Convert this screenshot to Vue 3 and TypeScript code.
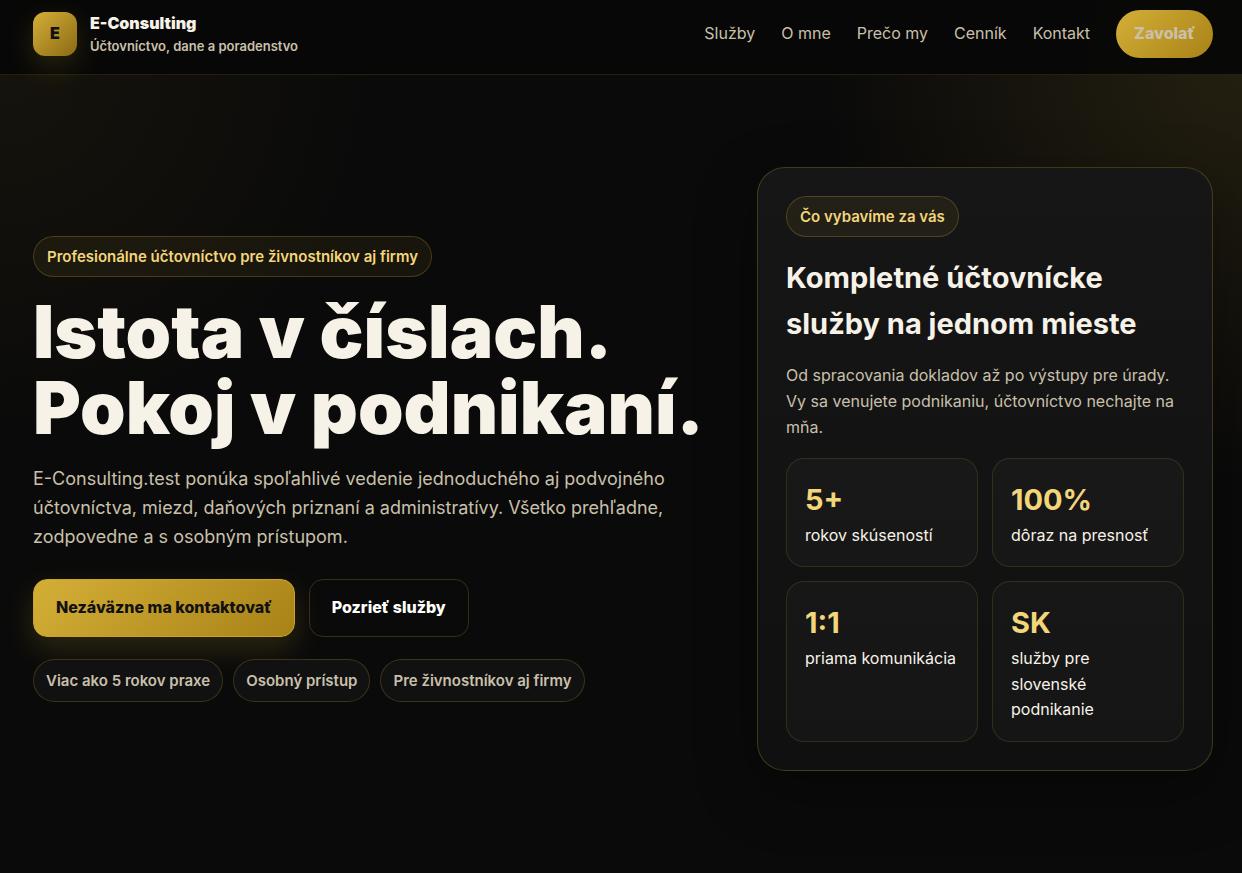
<script setup lang="ts">
interface NavLink {
  label: string
  href: string
}

interface Stat {
  value: string
  label: string
}

const links: NavLink[] = [
  { label: 'Služby', href: '#sluzby' },
  { label: 'O mne', href: '#o-mne' },
  { label: 'Prečo my', href: '#preco-my' },
  { label: 'Cenník', href: '#cennik' },
  { label: 'Kontakt', href: '#kontakt' },
]

const chips: string[] = ['Viac ako 5 rokov praxe', 'Osobný prístup', 'Pre živnostníkov aj firmy']

const stats: Stat[] = [
  { value: '5+', label: 'rokov skúseností' },
  { value: '100%', label: 'dôraz na presnosť' },
  { value: '1:1', label: 'priama komunikácia' },
  { value: 'SK', label: 'služby pre slovenské podnikanie' },
]
</script>

<template>
  <div class="page">
    <header class="topbar">
      <a class="brand" href="#domov">
        <span class="logo">E</span>
        <span class="brand-text">
          <strong>E-Consulting</strong>
          <small>Účtovníctvo, dane a poradenstvo</small>
        </span>
      </a>
      <nav class="nav">
        <a v-for="link in links" :key="link.href" :href="link.href">{{ link.label }}</a>
        <a class="call" href="#zavolat">Zavolať</a>
      </nav>
    </header>

    <main class="hero">
      <section class="intro">
        <span class="badge">Profesionálne účtovníctvo pre živnostníkov aj firmy</span>
        <h1>Istota v číslach.<br />Pokoj v podnikaní.</h1>
        <p class="lead">
          E-Consulting.test ponúka spoľahlivé vedenie jednoduchého aj podvojného účtovníctva, miezd,
          daňových priznaní a administratívy. Všetko prehľadne, zodpovedne a s osobným prístupom.
        </p>
        <div class="actions">
          <a class="btn btn-primary" href="#kontakt">Nezáväzne ma kontaktovať</a>
          <a class="btn" href="#sluzby">Pozrieť služby</a>
        </div>
        <ul class="chips">
          <li v-for="chip in chips" :key="chip">{{ chip }}</li>
        </ul>
      </section>

      <aside class="card">
        <span class="badge">Čo vybavíme za vás</span>
        <h2>Kompletné účtovnícke služby na jednom mieste</h2>
        <p>
          Od spracovania dokladov až po výstupy pre úrady. Vy sa venujete podnikaniu, účtovníctvo
          nechajte na mňa.
        </p>
        <div class="stats">
          <div v-for="stat in stats" :key="stat.value" class="stat">
            <strong>{{ stat.value }}</strong>
            <span>{{ stat.label }}</span>
          </div>
        </div>
      </aside>
    </main>
  </div>
</template>

<style>
body {
  margin: 0;
  background: #0a0a0a;
}
</style>

<style scoped>
.page {
  min-height: 100vh;
  box-sizing: border-box;
  color: #f7f2e8;
  font-family: Inter, 'Liberation Sans', sans-serif;
  font-size: 16px;
  line-height: 1.6;
  background:
    radial-gradient(circle at 100% 60px, rgba(212, 175, 55, 0.13), transparent 420px),
    radial-gradient(circle at 0 60px, rgba(212, 175, 55, 0.06), transparent 380px),
    #0a0a0a;
}

a {
  color: inherit;
  text-decoration: none;
}

.topbar {
  display: flex;
  align-items: center;
  justify-content: space-between;
  padding: 10px 29px 16px 33px;
  background: rgba(7, 7, 7, 0.96);
  border-bottom: 1px solid rgba(212, 175, 55, 0.15);
}

.brand {
  display: flex;
  align-items: center;
  gap: 13px;
}

.logo {
  display: grid;
  place-items: center;
  width: 44px;
  height: 44px;
  border-radius: 12px;
  background: linear-gradient(135deg, #d4af37, #8b6914);
  box-shadow: 0 10px 30px rgba(212, 175, 55, 0.18);
  color: #111;
  font-weight: 900;
}

.brand-text {
  display: flex;
  flex-direction: column;
}

.brand-text strong {
  line-height: 24px;
  font-weight: 900;
}

.brand-text small {
  font-size: 13px;
  line-height: 22px;
  font-weight: 600;
  color: #c9c0ab;
}

.nav {
  display: flex;
  align-items: center;
  gap: 26px;
  color: #c9c0ab;
}

.call {
  padding: 11px 18px;
  border-radius: 24px;
  background: linear-gradient(135deg, #d4af37, #a88217);
  font-weight: 800;
}

.hero {
  display: grid;
  grid-template-columns: minmax(0, 680fr) minmax(0, 456fr);
  gap: 44px;
  align-items: center;
  padding: 92px 29px 92px 33px;
}

.badge {
  display: inline-block;
  padding: 8px 13px;
  border: 1px solid rgba(212, 175, 55, 0.25);
  border-radius: 24px;
  background: rgba(212, 175, 55, 0.07);
  color: #f3d57a;
  font-size: 15px;
  line-height: 23px;
  font-weight: 600;
  vertical-align: top;
}

h1 {
  margin: 17px 0 18px;
  font-size: 73px;
  line-height: 76px;
  font-weight: 900;
}

.lead {
  margin: 0 0 28px;
  color: #c9c0ab;
  font-size: 18px;
  line-height: 29px;
}

.actions {
  display: flex;
  flex-wrap: wrap;
  gap: 14px;
}

.btn {
  padding: 15px 22px;
  border: 1px solid rgba(212, 175, 55, 0.22);
  border-radius: 14px;
  color: #fff;
  font-weight: 800;
}

.btn-primary {
  border-color: #c9a22f;
  background: linear-gradient(135deg, #d4af37, #a88217);
  box-shadow: 0 12px 30px rgba(212, 175, 55, 0.18);
  color: #111;
}

.chips {
  display: flex;
  flex-wrap: wrap;
  gap: 10px;
  margin: 22px 0 0;
  padding: 0;
  list-style: none;
}

.chips li {
  padding: 9px 12px;
  border: 1px solid rgba(212, 175, 55, 0.22);
  border-radius: 24px;
  background: #111;
  color: #c9c0ab;
  font-size: 15px;
  line-height: 23px;
  font-weight: 600;
}

.card {
  padding: 28px;
  border: 1px solid rgba(212, 175, 55, 0.25);
  border-radius: 28px;
  background: linear-gradient(180deg, #161616, #101010);
  box-shadow: 0 20px 60px rgba(0, 0, 0, 0.35);
}

h2 {
  margin: 18px 0 15px;
  font-size: 29px;
  line-height: 46px;
  font-weight: 700;
}

.card p {
  margin: 0 0 18px;
  color: #c9c0ab;
  line-height: 26px;
}

.stats {
  display: grid;
  grid-template-columns: repeat(2, minmax(0, 1fr));
  gap: 14px;
}

.stat {
  padding: 18px;
  border: 1px solid rgba(212, 175, 55, 0.15);
  border-radius: 18px;
  background: rgba(255, 255, 255, 0.025);
}

.stat strong {
  display: block;
  color: #f3d57a;
  font-size: 29px;
  line-height: 46px;
}
</style>
